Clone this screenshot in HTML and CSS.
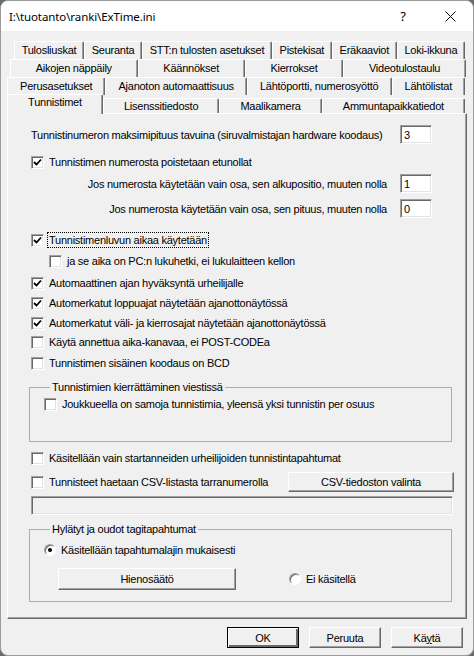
FILE: index.html
```html
<!DOCTYPE html>
<html lang="fi">

<head>
    <meta charset="UTF-8">
    <title>ExTime.ini</title>
    <link rel="stylesheet" href="styles.css">
</head>

<body>
    <div class="window">
        <div class="titlebar">
            <span class="title">I:\tuotanto\ranki\ExTime.ini</span>
            <span class="help">?</span>
            <span class="close">
                <svg width="11" height="11" viewBox="0 0 11 11"><path d="M0.5 0.5 L10.5 10.5 M10.5 0.5 L0.5 10.5" stroke="#000" stroke-width="1" fill="none"/></svg>
            </span>
        </div>

        <div class="tabs">
            <div class="tabrow row1">
                <div class="tab">Tulosliuskat</div>
                <div class="tab">Seuranta</div>
                <div class="tab">STT:n tulosten asetukset</div>
                <div class="tab">Pistekisat</div>
                <div class="tab">Eräkaaviot</div>
                <div class="tab">Loki-ikkuna</div>
            </div>
            <div class="tabrow row2">
                <div class="tab">Aikojen näppäily</div>
                <div class="tab">Käännökset</div>
                <div class="tab">Kierrokset</div>
                <div class="tab">Videotulostaulu</div>
            </div>
            <div class="tabrow row3">
                <div class="tab">Perusasetukset</div>
                <div class="tab">Ajanoton automaattisuus</div>
                <div class="tab">Lähtöportti, numerosyöttö</div>
                <div class="tab">Lähtölistat</div>
            </div>
            <div class="tabrow row4">
                <div class="tab active">Tunnistimet</div>
                <div class="tab">Lisenssitiedosto</div>
                <div class="tab">Maalikamera</div>
                <div class="tab">Ammuntapaikkatiedot</div>
            </div>
        </div>

        <div class="panel">
            <div class="row first">
                <span class="label">Tunnistinumeron maksimipituus tavuina (siruvalmistajan hardware koodaus)</span>
                <span class="edit">3</span>
            </div>

            <div class="check c-top">
                <span class="box on"><svg width="9" height="9" viewBox="0 0 9 9"><path d="M1 4 L3.5 6.5 L8 1.5" stroke="#000" stroke-width="1.8" fill="none"/></svg></span>
                <span>Tunnistimen numerosta poistetaan etunollat</span>
            </div>

            <div class="row sub s1">
                <span class="label">Jos numerosta käytetään vain osa, sen alkupositio, muuten nolla</span>
                <span class="edit">1</span>
            </div>
            <div class="row sub s2">
                <span class="label">Jos numerosta käytetään vain osa, sen pituus, muuten nolla</span>
                <span class="edit">0</span>
            </div>

            <div class="check c-luku">
                <span class="box on"><svg width="9" height="9" viewBox="0 0 9 9"><path d="M1 4 L3.5 6.5 L8 1.5" stroke="#000" stroke-width="1.8" fill="none"/></svg></span>
                <span class="focus">Tunnistimenluvun aikaa käytetään</span>
            </div>
            <div class="check indent">
                <span class="box"></span>
                <span>ja se aika on PC:n lukuhetki, ei lukulaitteen kellon</span>
            </div>
            <div class="check c-auto">
                <span class="box on"><svg width="9" height="9" viewBox="0 0 9 9"><path d="M1 4 L3.5 6.5 L8 1.5" stroke="#000" stroke-width="1.8" fill="none"/></svg></span>
                <span>Automaattinen ajan hyväksyntä urheilijalle</span>
            </div>
            <div class="check">
                <span class="box on"><svg width="9" height="9" viewBox="0 0 9 9"><path d="M1 4 L3.5 6.5 L8 1.5" stroke="#000" stroke-width="1.8" fill="none"/></svg></span>
                <span>Automerkatut loppuajat näytetään ajanottonäytössä</span>
            </div>
            <div class="check">
                <span class="box on"><svg width="9" height="9" viewBox="0 0 9 9"><path d="M1 4 L3.5 6.5 L8 1.5" stroke="#000" stroke-width="1.8" fill="none"/></svg></span>
                <span>Automerkatut väli- ja kierrosajat näytetään ajanottonäytössä</span>
            </div>
            <div class="check c-post">
                <span class="box"></span>
                <span>Käytä annettua aika-kanavaa, ei POST-CODEa</span>
            </div>
            <div class="check c-bcd">
                <span class="box"></span>
                <span>Tunnistimen sisäinen koodaus on BCD</span>
            </div>

            <fieldset class="group g1">
                <legend>Tunnistimien kierrättäminen viestissä</legend>
                <div class="check">
                    <span class="box"></span>
                    <span>Joukkueella on samoja tunnistimia, yleensä yksi tunnistin per osuus</span>
                </div>
            </fieldset>

            <div class="check c-start">
                <span class="box"></span>
                <span>Käsitellään vain startanneiden urheilijoiden tunnistintapahtumat</span>
            </div>
            <div class="row csv">
                <div class="check">
                    <span class="box"></span>
                    <span>Tunnisteet haetaan CSV-listasta tarranumerolla</span>
                </div>
                <span class="button csv-btn">CSV-tiedoston valinta</span>
            </div>
            <div class="static"></div>

            <fieldset class="group g2">
                <legend>Hylätyt ja oudot tagitapahtumat</legend>
                <div class="check r-top">
                    <span class="radio on"></span>
                    <span>Käsitellään tapahtumalajin mukaisesti</span>
                </div>
                <div class="row fine">
                    <span class="button fine-btn">Hienosäätö</span>
                    <div class="check">
                        <span class="radio"></span>
                        <span>Ei käsitellä</span>
                    </div>
                </div>
            </fieldset>
        </div>

        <div class="footer">
            <span class="button default">OK</span>
            <span class="button">Peruuta</span>
            <span class="button">Kä<u>y</u>tä</span>
        </div>
    </div>
</body>

</html>
```

FILE: styles.css
```css
* {
    margin: 0;
    padding: 0;
    box-sizing: border-box;
}

body {
    font-family: "Liberation Sans", Arial, sans-serif;
    font-size: 11px;
    letter-spacing: -0.25px;
    color: #000;
    background: #6b6b6b;
}

.window {
    width: 474px;
    height: 656px;
    background: #f0f0f0;
    border: 1px solid #9c9c9c;
    border-radius: 8px;
    overflow: hidden;
}

/* title bar */

.titlebar {
    height: 30px;
    background: #fff;
    display: flex;
    align-items: center;
    padding-left: 8px;
}

.title {
    font-family: "Noto Sans", sans-serif;
    font-size: 11.5px;
    letter-spacing: -0.1px;
    flex: 1;
}

.help {
    font-family: "Noto Sans", sans-serif;
    font-size: 13px;
    width: 46px;
    text-align: center;
    margin-right: 1px;
}

.close {
    width: 46px;
    display: flex;
    justify-content: center;
}

/* tabs */

.tabs {
    margin-top: 10px;
}

.tabrow {
    display: flex;
    height: 18px;
}

.row1 {
    margin-left: 13px;
    width: 451px;
}

.row2 {
    margin-left: 9px;
    width: 456px;
}

.row3 {
    margin-left: 6px;
    width: 458px;
}

.row4 {
    margin-left: 6px;
    width: 458px;
    align-items: flex-end;
}

.tab {
    flex: 1 1 auto;
    height: 18px;
    padding: 0 6px;
    line-height: 16px;
    text-align: center;
    white-space: nowrap;
    border-top: 1px solid #fff;
    border-left: 1px solid #fff;
    border-right: 1px solid #696969;
    border-radius: 2px 2px 0 0;
    box-shadow: inset -1px 0 #a0a0a0;
}

.row4 .tab {
    height: 15px;
    line-height: 14px;
}

.row4 .tab.active {
    position: relative;
    z-index: 1;
    height: 20px;
    line-height: 15px;
    margin-bottom: -1px;
    background: #f0f0f0;
}

/* page */

.panel {
    margin-left: 6px;
    width: 460px;
    height: 506px;
    border: 1px solid;
    border-color: #fff #696969 #696969 #fff;
    box-shadow: inset -1px -1px #a0a0a0;
    padding-left: 23px;
}

.row {
    display: flex;
    align-items: center;
}

.first {
    margin-top: 11px;
    height: 19px;
}

.first .label {
    width: 369px;
}

.sub {
    height: 19px;
}

.sub .label {
    width: 356px;
    text-align: right;
    margin-right: 13px;
}

.s1 {
    margin-top: 2px;
}

.s2 {
    margin-top: 6px;
}

.edit {
    width: 32px;
    height: 19px;
    background: #fff;
    border: 1px solid;
    border-color: #a0a0a0 #fff #fff #a0a0a0;
    box-shadow: inset 1px 1px #696969, inset -1px -1px #e3e3e3;
    padding: 2px 0 0 3px;
    line-height: 14px;
}

.check {
    display: flex;
    align-items: center;
    height: 20px;
    gap: 5px;
}

.box {
    width: 13px;
    height: 13px;
    background: #fff;
    border: 1px solid;
    border-color: #a0a0a0 #fff #fff #a0a0a0;
    box-shadow: inset 1px 1px #696969, inset -1px -1px #e3e3e3;
    display: flex;
    align-items: center;
    justify-content: center;
}

.c-top {
    margin-top: 8px;
}

.c-luku {
    margin-top: 12px;
}

.indent {
    margin-left: 18px;
    margin-top: 1px;
}

.c-auto {
    margin-top: 2px;
}

.c-post {
    margin-top: -1px;
}

.c-bcd {
    margin-top: 1px;
}

.focus {
    outline: 1px dotted #000;
    outline-offset: 1px;
}

.group {
    border: 1px solid #adadad;
    margin-left: -2px;
    width: 423px;
    padding: 0 0 0 14px;
}

.group legend {
    padding: 0 2px;
    margin-left: 6px;
    line-height: 13px;
}

.g1 {
    margin-top: 8px;
    height: 61px;
}

.c-start {
    margin-top: 6px;
}

.csv {
    margin-top: 4px;
    justify-content: space-between;
    width: 423px;
}

.button {
    display: flex;
    align-items: center;
    justify-content: center;
    height: 20px;
    background: #f0f0f0;
    border: 1px solid;
    border-color: #fff #696969 #696969 #fff;
    box-shadow: inset -1px -1px #a0a0a0;
}

.csv-btn {
    width: 166px;
}

.static {
    margin-top: 4px;
    width: 422px;
    height: 19px;
    border: 1px solid;
    border-color: #a0a0a0 #fff #fff #a0a0a0;
    box-shadow: inset 1px 1px #696969, inset -1px -1px #e3e3e3;
}

.g2 {
    margin-top: 8px;
    height: 79px;
}

.r-top {
    margin-top: 4px;
}

.radio {
    width: 12px;
    height: 12px;
    border-radius: 50%;
    background: #fff;
    border: 1px solid;
    border-color: #a0a0a0 #fff #fff #a0a0a0;
    box-shadow: inset 1px 1px #696969;
    display: flex;
    align-items: center;
    justify-content: center;
}

.radio.on::after {
    content: "";
    width: 4px;
    height: 4px;
    border-radius: 50%;
    background: #000;
}

.fine {
    margin-top: 8px;
    gap: 53px;
}

.fine-btn {
    margin-left: 14px;
    width: 178px;
    height: 22px;
}

/* bottom buttons */

.footer {
    display: flex;
    justify-content: flex-end;
    gap: 10px;
    padding: 8px 10px 0 0;
}

.footer .button {
    width: 72px;
    height: 21px;
}

.footer .default {
    border-color: #000;
    box-shadow: inset 1px 1px #fff, inset -2px -2px #696969, inset -1px -1px #a0a0a0;
}
```
